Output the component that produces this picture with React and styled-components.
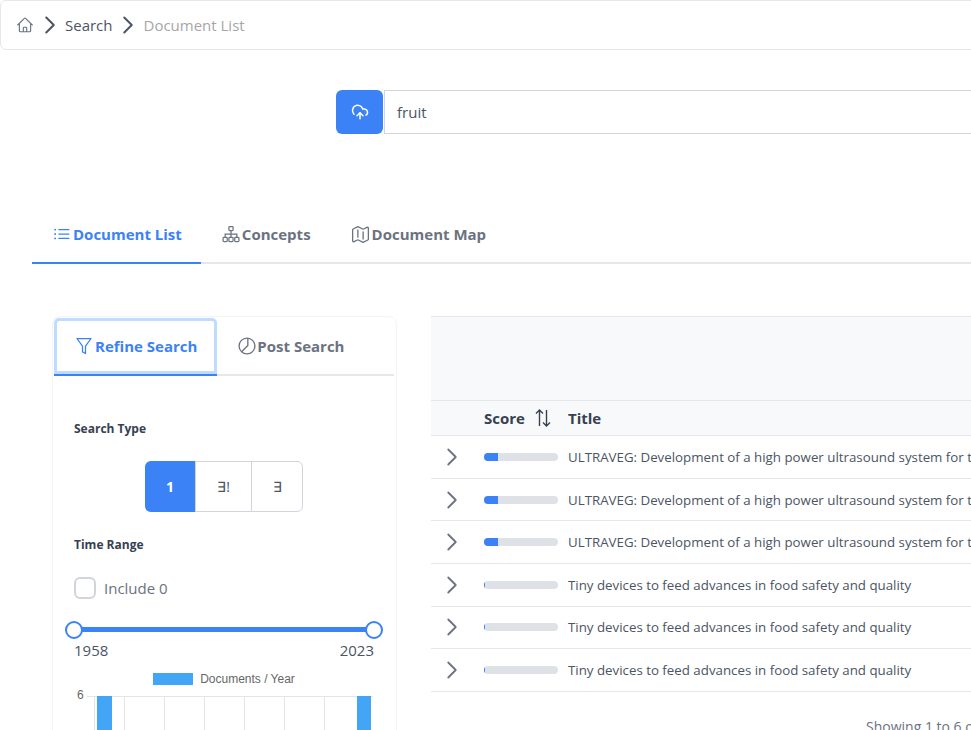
import React from "react";
import styled, { createGlobalStyle } from "styled-components";
import { CloudUpload } from "lucide-react";
import {
  HiOutlineHome,
  HiOutlineChevronRight,
  HiOutlineListBullet,
  HiOutlineMap,
} from "react-icons/hi2";

const GlobalStyle = createGlobalStyle`
  html, body {
    margin: 0;
    padding: 0;
    height: 730px;
    overflow: hidden;
    background: #fff;
  }
  * { box-sizing: border-box; }
`;

const Page = styled.div`
  width: 971px;
  height: 730px;
  overflow: hidden;
  font-family: "Open Sans", "Noto Sans", sans-serif;
  color: #374151;
`;

const Canvas = styled.div`
  width: 1500px;
`;

const Breadcrumb = styled.nav`
  height: 50px;
  display: flex;
  align-items: center;
  gap: 3px;
  padding-left: 15px;
  border: 1px solid #e5e7eb;
  border-radius: 6px;
  font-size: 15px;
`;

const CrumbArrow = styled(HiOutlineChevronRight)`
  margin: 0 -1px 0 1px;
  color: #4b5563;
`;

const Crumb = styled.span`
  margin: 0 ${(p) => (p.$muted ? 0 : -1)}px 0 ${(p) => (p.$muted ? 2 : 1)}px;
  color: ${(p) => (p.$muted ? "#a6a6a6" : "#4b5563")};
`;

const SearchRow = styled.div`
  display: flex;
  gap: 1px;
  margin: 40px 0 0 336px;
  height: 44px;
`;

const UploadButton = styled.button`
  width: 47px;
  border: none;
  border-radius: 6px;
  background: #3b82f6;
  color: #fff;
  display: flex;
  align-items: center;
  justify-content: center;
  padding: 0;
`;

const SearchInput = styled.div`
  flex: 1;
  display: flex;
  align-items: center;
  padding-left: 12px;
  border: 1px solid #d1d5db;
  font-size: 15px;
  color: #4b5563;
`;

const MainTabs = styled.div`
  display: flex;
  margin: 74px 32px 0;
  height: 56px;
  border-bottom: 2px solid #e5e7eb;
`;

const MainTab = styled.div`
  display: flex;
  align-items: center;
  gap: 1px;
  height: 56px;
  padding: 0 19px 2px 20px;
  font-size: 15px;
  font-weight: 700;
  color: ${(p) => (p.$active ? "#3b82f6" : "#6b7280")};
  border-bottom: 2px solid ${(p) => (p.$active ? "#3b82f6" : "transparent")};
`;

const Content = styled.div`
  display: flex;
  align-items: flex-start;
  margin: 52px 0 0 52px;
  gap: 34px;
`;

const SidePanel = styled.aside`
  width: 345px;
  height: 500px;
  flex: none;
  border: 1px solid #f3f4f6;
  border-radius: 8px;
  padding: 1px 2px 1px 1px;
`;

const SideTabs = styled.div`
  display: flex;
  height: 58px;
  border-bottom: 2px solid #e5e7eb;
`;

const SideTab = styled.div`
  height: 58px;
  display: flex;
  align-items: center;
  gap: ${(p) => (p.$active ? 1 : 0)}px;
  padding: 0 20px;
  font-size: 15px;
  font-weight: 700;
  color: ${(p) => (p.$active ? "#3b82f6" : "#6b7280")};
  border-bottom: 2px solid ${(p) => (p.$active ? "#3b82f6" : "transparent")};
  ${(p) =>
    p.$active &&
    "box-shadow: inset 0 0 0 3px #bfdbfe; border-radius: 5px 5px 0 0;"}
`;

const SideBody = styled.div`
  padding: 0 20px;
`;

const FieldLabel = styled.div`
  font-size: 12px;
  font-weight: 700;
  line-height: 16px;
  color: #374151;
  margin-top: ${(p) => p.$top}px;
`;

const ButtonGroup = styled.div`
  display: flex;
  width: 158px;
  height: 51px;
  margin: 24px 0 0 71px;
  border: 1px solid #d1d5db;
  border-radius: 6px;
`;

const GroupButton = styled.div`
  width: ${(p) => p.$width}px;
  flex: none;
  display: flex;
  align-items: center;
  justify-content: center;
  font-size: 14px;
  font-weight: ${(p) => (p.$active ? 700 : 400)};
  color: ${(p) => (p.$active ? "#fff" : "#4b5563")};
  ${(p) =>
    p.$active &&
    "background: #3b82f6; margin: -1px 0 -1px -1px; border-radius: 6px 0 0 6px;"}
  & + & {
    border-left: 1px solid #d1d5db;
  }
`;

const CheckRow = styled.label`
  display: flex;
  align-items: center;
  gap: 8px;
  margin-top: 24px;
  font-size: 15px;
  color: #6b7280;
`;

const CheckBox = styled.span`
  width: 22px;
  height: 22px;
  border: 2px solid #d1d5db;
  border-radius: 6px;
`;

const Slider = styled.div`
  position: relative;
  height: 5px;
  margin-top: 28px;
  background: #3b82f6;
  width: 300px;
`;

const Knob = styled.span`
  position: absolute;
  top: -6px;
  ${(p) => p.$side}: -9px;
  width: 18px;
  height: 18px;
  border: 2px solid #3b82f6;
  border-radius: 50%;
  background: #fff;
`;

const SliderLabels = styled.div`
  display: flex;
  justify-content: space-between;
  width: 300px;
  margin-top: 8px;
  font-size: 15px;
  line-height: 20px;
  color: #4b5563;
`;

const Legend = styled.div`
  display: flex;
  align-items: center;
  justify-content: center;
  gap: 7px;
  margin: 12px 0 0 0;
  width: 300px;
  font-family: "Liberation Sans", sans-serif;
  font-size: 12px;
  line-height: 14px;
  color: #666;
`;

const Swatch = styled.span`
  width: 40px;
  height: 12px;
  background: #42a5f5;
`;

const ChartSvg = styled.svg`
  display: block;
  margin: 2px 0 0 -16px;
`;

const ResultsPanel = styled.section`
  flex: 1;
  min-width: 0;
`;

const ResultsToolbar = styled.div`
  height: 84px;
  background: #f8f9fa;
  border-top: 1px solid #e5e7eb;
`;

const Row = styled.div`
  display: grid;
  grid-template-columns: 53px 84px 1fr;
  align-items: center;
  height: ${(p) => p.$height || 42.6}px;
  border-bottom: 1px solid #e5e7eb;
  font-size: 13.3px;
  color: #4b5563;
  white-space: nowrap;
`;

const HeadRow = styled(Row)`
  background: #f8f9fa;
  border-top: 1px solid #e5e7eb;
  font-size: 15px;
  font-weight: 700;
  color: #374151;
`;

const ScoreHead = styled.span`
  display: flex;
  align-items: center;
  gap: 9px;
`;

const Chevron = styled.span`
  display: flex;
  padding-left: 9px;
  color: #6b7280;
`;

const Bar = styled.div`
  width: 74px;
  height: 8px;
  border-radius: 4px;
  background: #dee2e6;
  overflow: hidden;
`;

const BarFill = styled.div`
  height: 100%;
  background: #3b82f6;
`;

const Footer = styled.div`
  margin-top: 25px;
  padding-left: 435px;
  font-size: 14px;
  color: #6b7280;
`;

const ConceptsIcon = () => (
  <svg width="20" height="20" viewBox="0 0 24 24" fill="none" stroke="currentColor" strokeWidth="1.5">
    <rect x="9.5" y="3" width="5" height="5" rx="1" />
    <rect x="2.5" y="16" width="5" height="5" rx="1" />
    <rect x="9.5" y="16" width="5" height="5" rx="1" />
    <rect x="16.5" y="16" width="5" height="5" rx="1" />
    <path d="M12 8v8M5 16v-4h14v4" />
  </svg>
);

const FunnelIcon = () => (
  <svg width="20" height="20" viewBox="0 0 24 24" fill="none" stroke="currentColor" strokeWidth="1.5" strokeLinejoin="round">
    <path d="M3.5 3h17l-6.7 9.2V21l-3.6-2v-6.8z" />
  </svg>
);

const PieIcon = () => (
  <svg width="20" height="20" viewBox="0 0 24 24" fill="none" stroke="currentColor" strokeWidth="1.6">
    <circle cx="12" cy="12" r="9.5" />
    <path d="M13 2.5V11.5L5.6 19" />
  </svg>
);

const SortIcon = () => (
  <svg width="18" height="20" viewBox="0 0 18 20" fill="none" stroke="currentColor" strokeWidth="1.4">
    <path d="M5.5 18V2M2 5.5L5.5 2L9 5.5M12.5 2v16M9 14.5l3.5 3.5l3.5-3.5" />
  </svg>
);

const ChartArt = () => (
  <ChartSvg width="320" height="42" viewBox="0 0 320 42">
    <text x="19" y="11" fontFamily="Liberation Sans" fontSize="12" fill="#666">6</text>
    <path d="M29 8.5H315" stroke="#e5e5e5" />
    {[36.5, 66.5, 106.5, 146.5, 186.5, 226.5, 266.5, 306.5].map((x) => (
      <path key={x} d={`M${x} 8V42`} stroke="#e5e5e5" />
    ))}
    <rect x="39" y="8" width="15" height="34" fill="#42a5f5" />
    <rect x="299" y="8" width="14" height="34" fill="#42a5f5" />
  </ChartSvg>
);

const rows = [
  { title: "ULTRAVEG: Development of a high power ultrasound system for the fruit and vegetable industry", score: 19 },
  { title: "ULTRAVEG: Development of a high power ultrasound system for the fruit and vegetable industry", score: 19 },
  { title: "ULTRAVEG: Development of a high power ultrasound system for the fruit and vegetable industry", score: 19 },
  { title: "Tiny devices to feed advances in food safety and quality", score: 2 },
  { title: "Tiny devices to feed advances in food safety and quality", score: 2 },
  { title: "Tiny devices to feed advances in food safety and quality", score: 2 },
];

const App = () => (
  <Page>
    <GlobalStyle />
    <Canvas>
      <Breadcrumb>
        <HiOutlineHome size={18} color="#6b7280" />
        <CrumbArrow size={24} strokeWidth={2} />
        <Crumb>Search</Crumb>
        <CrumbArrow size={24} strokeWidth={2} />
        <Crumb $muted>Document List</Crumb>
      </Breadcrumb>

      <SearchRow>
        <UploadButton>
          <CloudUpload size={18} strokeWidth={2} />
        </UploadButton>
        <SearchInput>fruit</SearchInput>
      </SearchRow>

      <MainTabs>
        <MainTab $active>
          <HiOutlineListBullet size={20} />
          Document List
        </MainTab>
        <MainTab>
          <ConceptsIcon />
          Concepts
        </MainTab>
        <MainTab>
          <HiOutlineMap size={21} />
          Document Map
        </MainTab>
      </MainTabs>

      <Content>
        <SidePanel>
          <SideTabs>
            <SideTab $active>
              <FunnelIcon />
              Refine Search
            </SideTab>
            <SideTab>
              <PieIcon />
              Post Search
            </SideTab>
          </SideTabs>
          <SideBody>
            <FieldLabel $top={45}>Search Type</FieldLabel>
            <ButtonGroup>
              <GroupButton $active $width={50}>1</GroupButton>
              <GroupButton $width={56}>∃!</GroupButton>
              <GroupButton $width={51}>∃</GroupButton>
            </ButtonGroup>
            <FieldLabel $top={25}>Time Range</FieldLabel>
            <CheckRow>
              <CheckBox />
              Include 0
            </CheckRow>
            <Slider>
              <Knob $side="left" />
              <Knob $side="right" />
            </Slider>
            <SliderLabels>
              <span>1958</span>
              <span>2023</span>
            </SliderLabels>
            <Legend>
              <Swatch />
              Documents / Year
            </Legend>
            <ChartArt />
          </SideBody>
        </SidePanel>

        <ResultsPanel>
          <ResultsToolbar />
          <HeadRow $height={36.3}>
            <span />
            <ScoreHead>
              Score
              <SortIcon />
            </ScoreHead>
            <span>Title</span>
          </HeadRow>
          {rows.map((row, i) => (
            <Row key={i}>
              <Chevron>
                <HiOutlineChevronRight size={24} strokeWidth={1.8} />
              </Chevron>
              <Bar>
                <BarFill style={{ width: `${row.score}%` }} />
              </Bar>
              <span>{row.title}</span>
            </Row>
          ))}
          <Footer>Showing 1 to 6 of 6 entries</Footer>
        </ResultsPanel>
      </Content>
    </Canvas>
  </Page>
);

export default App;
